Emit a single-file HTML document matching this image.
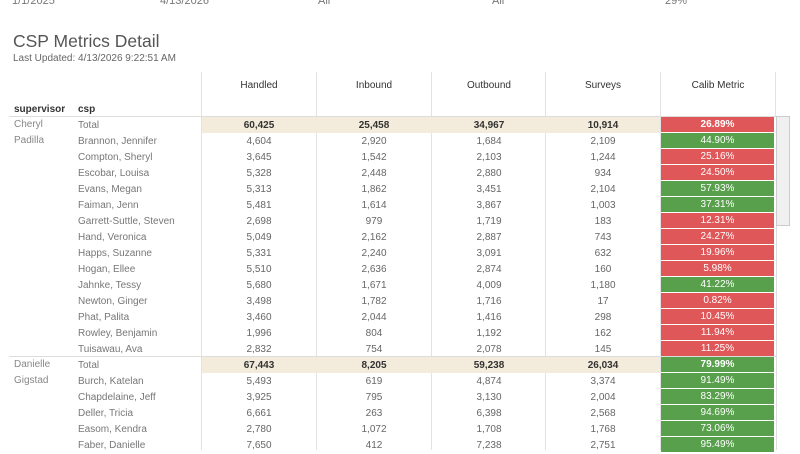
<!DOCTYPE html>
<html><head><meta charset="utf-8"><style>
*{margin:0;padding:0;box-sizing:border-box}
body{width:800px;height:450px;overflow:hidden;background:#fff;font-family:"Liberation Sans",sans-serif;position:relative;color:#666}
.a{position:absolute;white-space:nowrap}
.top{top:-5px;font-size:11px;color:#777}
.vl{position:absolute;top:72px;bottom:0;width:1px;background:#e2e2e2}
.h{position:absolute;top:80px;font-size:10px;color:#333;text-align:center;width:114px}
.r{position:absolute;left:0;width:800px;height:16px;font-size:10px;line-height:17px}
.r span{position:absolute;top:0;text-align:center;width:114px;color:#666}
.r .c{left:78px;text-align:left;width:auto;color:#777}
.r .c1{left:202px}.r .c2{left:317px}.r .c3{left:432px}.r .c4{left:546px}
.r .c5{left:661px;width:113px;height:15px;line-height:16px;color:#fff}
.t .bg{position:absolute;left:202px;width:458px;height:16px;top:0;background:#f3ebdb}
.t span{font-weight:bold;color:#333}
.t .c{font-weight:normal;color:#777}
.t .c5{font-weight:bold}
.R{background:#e05759}.G{background:#59a04d}
.sup{position:absolute;left:14px;font-size:10px;line-height:16px;color:#888;padding-top:1px}
</style></head><body>
<div class="a top" style="left:12px">1/1/2025</div>
<div class="a top" style="left:160px">4/13/2026</div>
<div class="a top" style="left:318px">All</div>
<div class="a top" style="left:492px">All</div>
<div class="a top" style="left:665px">29%</div>
<div class="a" style="left:13px;top:31px;font-size:17.5px;color:#555">CSP Metrics Detail</div>
<div class="a" style="left:13px;top:53px;font-size:10px;color:#666">Last Updated: 4/13/2026 9:22:51 AM</div>
<div class="vl" style="left:201px"></div><div class="vl" style="left:316px"></div><div class="vl" style="left:431px"></div><div class="vl" style="left:545px"></div><div class="vl" style="left:660px"></div><div class="vl" style="left:775px;top:72px;height:44px"></div>
<div class="h" style="left:202px">Handled</div><div class="h" style="left:317px">Inbound</div><div class="h" style="left:432px">Outbound</div><div class="h" style="left:546px">Surveys</div><div class="h" style="left:661px">Calib Metric</div>
<div class="a" style="left:14px;top:104px;font-size:10px;color:#333;font-weight:bold">supervisor</div>
<div class="a" style="left:78px;top:104px;font-size:10px;color:#333;font-weight:bold">csp</div>
<div class="a" style="left:9px;top:116px;width:767px;height:1px;background:#ddd"></div>
<div class="a" style="left:9px;top:356px;width:767px;height:1px;background:#ddd"></div>
<div class="a" style="left:776px;top:116px;width:14px;height:110px;background:#f0f0f0;border:1px solid #ccc"></div>
<div class="a" style="left:776px;top:226px;width:14px;height:224px;border-left:1px solid #ddd"></div>
<div class="sup" style="top:116px">Cheryl<br>Padilla</div>
<div class="sup" style="top:356px">Danielle<br>Gigstad</div>

<div class="r t" style="top:117px"><div class="bg"></div><span class="c">Total</span><span class="c1">60,425</span><span class="c2">25,458</span><span class="c3">34,967</span><span class="c4">10,914</span><span class="c5 R">26.89%</span></div>
<div class="r" style="top:133px"><span class="c">Brannon, Jennifer</span><span class="c1">4,604</span><span class="c2">2,920</span><span class="c3">1,684</span><span class="c4">2,109</span><span class="c5 G">44.90%</span></div>
<div class="r" style="top:149px"><span class="c">Compton, Sheryl</span><span class="c1">3,645</span><span class="c2">1,542</span><span class="c3">2,103</span><span class="c4">1,244</span><span class="c5 R">25.16%</span></div>
<div class="r" style="top:165px"><span class="c">Escobar, Louisa</span><span class="c1">5,328</span><span class="c2">2,448</span><span class="c3">2,880</span><span class="c4">934</span><span class="c5 R">24.50%</span></div>
<div class="r" style="top:181px"><span class="c">Evans, Megan</span><span class="c1">5,313</span><span class="c2">1,862</span><span class="c3">3,451</span><span class="c4">2,104</span><span class="c5 G">57.93%</span></div>
<div class="r" style="top:197px"><span class="c">Faiman, Jenn</span><span class="c1">5,481</span><span class="c2">1,614</span><span class="c3">3,867</span><span class="c4">1,003</span><span class="c5 G">37.31%</span></div>
<div class="r" style="top:213px"><span class="c">Garrett-Suttle, Steven</span><span class="c1">2,698</span><span class="c2">979</span><span class="c3">1,719</span><span class="c4">183</span><span class="c5 R">12.31%</span></div>
<div class="r" style="top:229px"><span class="c">Hand, Veronica</span><span class="c1">5,049</span><span class="c2">2,162</span><span class="c3">2,887</span><span class="c4">743</span><span class="c5 R">24.27%</span></div>
<div class="r" style="top:245px"><span class="c">Happs, Suzanne</span><span class="c1">5,331</span><span class="c2">2,240</span><span class="c3">3,091</span><span class="c4">632</span><span class="c5 R">19.96%</span></div>
<div class="r" style="top:261px"><span class="c">Hogan, Ellee</span><span class="c1">5,510</span><span class="c2">2,636</span><span class="c3">2,874</span><span class="c4">160</span><span class="c5 R">5.98%</span></div>
<div class="r" style="top:277px"><span class="c">Jahnke, Tessy</span><span class="c1">5,680</span><span class="c2">1,671</span><span class="c3">4,009</span><span class="c4">1,180</span><span class="c5 G">41.22%</span></div>
<div class="r" style="top:293px"><span class="c">Newton, Ginger</span><span class="c1">3,498</span><span class="c2">1,782</span><span class="c3">1,716</span><span class="c4">17</span><span class="c5 R">0.82%</span></div>
<div class="r" style="top:309px"><span class="c">Phat, Palita</span><span class="c1">3,460</span><span class="c2">2,044</span><span class="c3">1,416</span><span class="c4">298</span><span class="c5 R">10.45%</span></div>
<div class="r" style="top:325px"><span class="c">Rowley, Benjamin</span><span class="c1">1,996</span><span class="c2">804</span><span class="c3">1,192</span><span class="c4">162</span><span class="c5 R">11.94%</span></div>
<div class="r" style="top:341px"><span class="c">Tuisawau, Ava</span><span class="c1">2,832</span><span class="c2">754</span><span class="c3">2,078</span><span class="c4">145</span><span class="c5 R">11.25%</span></div>
<div class="r t" style="top:357px"><div class="bg"></div><span class="c">Total</span><span class="c1">67,443</span><span class="c2">8,205</span><span class="c3">59,238</span><span class="c4">26,034</span><span class="c5 G">79.99%</span></div>
<div class="r" style="top:373px"><span class="c">Burch, Katelan</span><span class="c1">5,493</span><span class="c2">619</span><span class="c3">4,874</span><span class="c4">3,374</span><span class="c5 G">91.49%</span></div>
<div class="r" style="top:389px"><span class="c">Chapdelaine, Jeff</span><span class="c1">3,925</span><span class="c2">795</span><span class="c3">3,130</span><span class="c4">2,004</span><span class="c5 G">83.29%</span></div>
<div class="r" style="top:405px"><span class="c">Deller, Tricia</span><span class="c1">6,661</span><span class="c2">263</span><span class="c3">6,398</span><span class="c4">2,568</span><span class="c5 G">94.69%</span></div>
<div class="r" style="top:421px"><span class="c">Easom, Kendra</span><span class="c1">2,780</span><span class="c2">1,072</span><span class="c3">1,708</span><span class="c4">1,768</span><span class="c5 G">73.06%</span></div>
<div class="r" style="top:437px"><span class="c">Faber, Danielle</span><span class="c1">7,650</span><span class="c2">412</span><span class="c3">7,238</span><span class="c4">2,751</span><span class="c5 G">95.49%</span></div>
</body></html>
